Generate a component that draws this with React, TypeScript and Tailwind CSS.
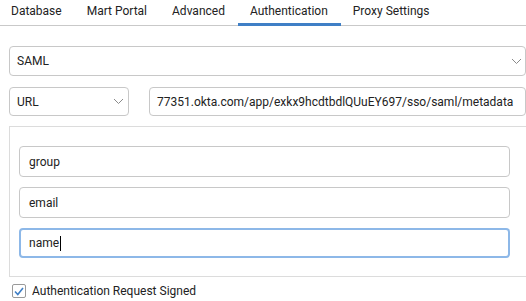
import React from 'react'

const tabs = ['Database', 'Mart Portal', 'Advanced', 'Authentication', 'Proxy Settings']

function Chevron() {
  return (
    <svg width="11" height="7" viewBox="0 0 11 7" fill="none">
      <path d="M1 1l4.5 4.5L10 1" stroke="#8a8a8a" strokeWidth="1" />
    </svg>
  )
}

export default function App() {
  const font = { fontFamily: 'Roboto, "Noto Sans", sans-serif' }
  return (
    <div className="w-[526px] h-[301px] bg-white overflow-hidden text-[12px] text-[#222]" style={font}>
      <div className="flex h-[26px] border-b border-[#c9c9c9]">
        {tabs.map((t) => (
          <div
            key={t}
            className={
              t === 'Authentication'
                ? 'flex items-center h-[26px] -mb-px pl-[12px] pr-[13px] pb-[2px] border-b-[3px] border-[#3f7fc6]'
                : 'flex items-center h-[26px] -mb-px pl-[12px] pr-[13px] pb-[2px] border-b-[3px] border-transparent first:pl-[11px]'
            }
          >
            {t}
          </div>
        ))}
      </div>

      <div className="pl-[9px] pt-[20px]">
        <div className="flex items-center justify-between w-[517px] h-[30px] border border-[#c8c8c8] rounded-[4px] pl-[7px] pr-[3px]">
          <span>SAML</span>
          <Chevron />
        </div>

        <div className="flex mt-[11px] gap-[20px]">
          <div className="flex items-center justify-between w-[120px] h-[29px] border border-[#c8c8c8] rounded-[4px] pl-[7px] pr-[4px]">
            <span>URL</span>
            <Chevron />
          </div>
          <div className="flex items-center w-[377px] h-[29px] border border-[#c8c8c8] rounded-[4px] pl-[7px] whitespace-nowrap overflow-hidden">
            77351.okta.com/app/exkx9hcdtbdlQUuEY697/sso/saml/metadata
          </div>
        </div>

        <div className="mt-[10px] w-[530px] border border-[#dcdcdc] pl-[9px] pt-[19px] pb-[18px] flex flex-col gap-[10px]">
          <div className="flex items-center w-[491px] h-[31px] border border-[#c8c8c8] rounded-[4px] pl-[9px]">group</div>
          <div className="flex items-center w-[491px] h-[31px] border border-[#c8c8c8] rounded-[4px] pl-[9px]">email</div>
          <div className="flex items-center w-[491px] h-[30px] border-2 border-[#8db8e8] rounded-[4px] pl-[8px]">
            name<span className="inline-block w-px h-[15px] bg-black ml-[1px]" />
          </div>
        </div>

        <div className="flex items-center mt-[5px] ml-[3px] gap-[6px]">
          <div className="flex items-center justify-center w-[14px] h-[14px] border border-[#9a9a9a] rounded-[2px] bg-white">
            <svg width="10" height="9" viewBox="0 0 10 9" fill="none">
              <path d="M1 4.5l2.8 3L9 1" stroke="#3f7fc6" strokeWidth="1.6" />
            </svg>
          </div>
          <span>Authentication Request Signed</span>
        </div>
      </div>
    </div>
  )
}
